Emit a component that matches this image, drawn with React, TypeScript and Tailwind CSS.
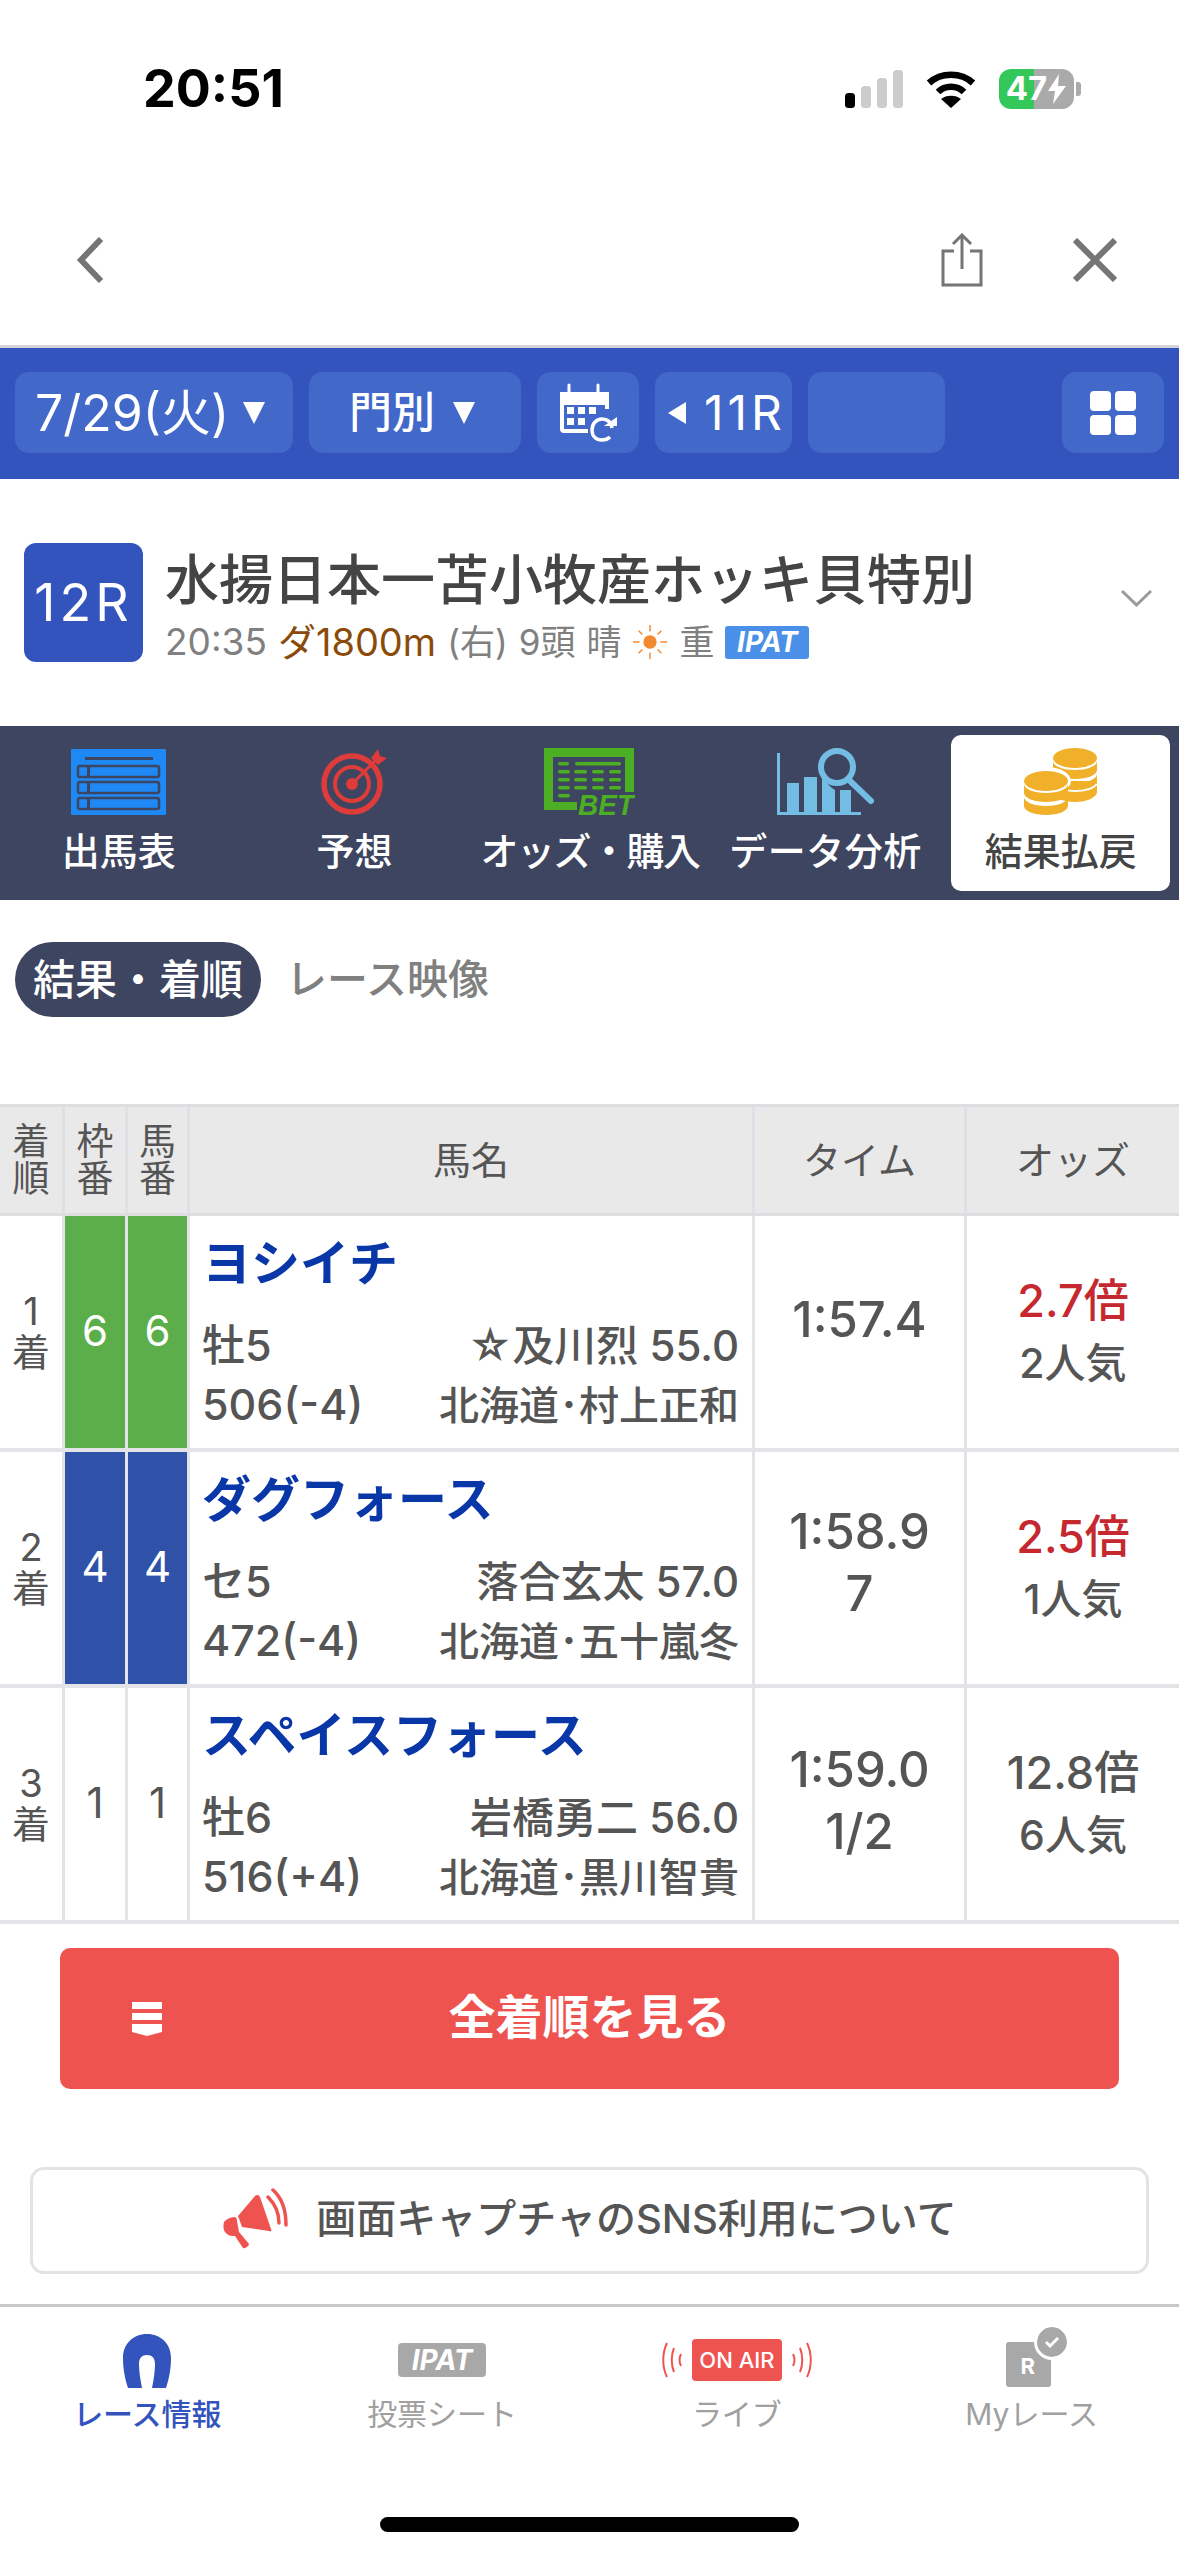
const ChevronLeftIcon = () => (
  <svg width="28" height="46" viewBox="0 0 28 46" fill="none" stroke="#757575" strokeWidth="6">
    <path d="M25 2 L5 23 L25 44" />
  </svg>
)

const ShareIcon = () => (
  <svg width="42" height="54" viewBox="0 0 42 54" fill="none" stroke="#757575" strokeWidth="3">
    <path d="M13 18 H2 V52 H40 V18 H29" />
    <path d="M21 36 V2 M12 11 L21 2 L30 11" />
  </svg>
)

const CloseIcon = () => (
  <svg width="44" height="44" viewBox="0 0 44 44" fill="none" stroke="#757575" strokeWidth="6">
    <path d="M2 2 L42 42 M42 2 L2 42" />
  </svg>
)

const SignalIcon = () => (
  <svg width="58" height="38" viewBox="0 0 58 38">
    <rect x="0" y="23" width="10" height="15" rx="3.5" fill="#000" />
    <rect x="16" y="16" width="10" height="22" rx="3.5" fill="#ccc" />
    <rect x="32" y="8" width="10" height="30" rx="3.5" fill="#ccc" />
    <rect x="48" y="0" width="10" height="38" rx="3.5" fill="#ccc" />
  </svg>
)

const WifiIcon = () => (
  <svg width="50" height="38" viewBox="0 0 50 38" fill="none" stroke="#000" strokeWidth="6.5">
    <path d="M3 13 C15 2 35 2 47 13" />
    <path d="M12 22 C19 15 31 15 38 22" />
    <path d="M25 38 L15 29 C20 24.5 30 24.5 35 29 Z" fill="#000" stroke="none" />
  </svg>
)

const BoltIcon = () => (
  <svg width="20" height="30" viewBox="0 0 20 30" fill="#fff">
    <path d="M12 0 L1 17 H8 L6 30 L19 12 H11 Z" />
  </svg>
)

const CalendarIcon = () => (
  <svg width="60" height="60" viewBox="18 10 60 60" fill="none" stroke="#fff" strokeWidth="4">
    <path d="M48 58 H24 C22.5 58 22 57.5 22 56 V23 C22 21.5 22.5 21 24 21 H65 C66.5 21 67 21.5 67 23 V36" />
    <path d="M22 21 H67 V30 H22 Z" fill="#fff" stroke="#fff" />
    <path d="M29 12 V23 M58 12 V23" strokeWidth="3" strokeLinecap="round" />
    <g fill="#fff" stroke="none">
      <rect x="27" y="34" width="7" height="7" />
      <rect x="38" y="34" width="7" height="7" />
      <rect x="49" y="34" width="7" height="7" />
      <rect x="27" y="45" width="7" height="7" />
      <rect x="38" y="45" width="7" height="7" />
    </g>
    <path d="M72 55 C71 49 67 46 62 46 C56 46 52 51 52 57 C52 63 56 67 62 67 C65 67 68 66 70 64" strokeWidth="3.5" />
    <path d="M64 53 H77 V44 Z" fill="#fff" stroke="none" />
  </svg>
)

const GridIcon = () => (
  <div className="grid grid-cols-2 gap-[4px]">
    <div className="h-[20px] w-[21px] rounded-[4px] bg-white" />
    <div className="h-[20px] w-[21px] rounded-[4px] bg-white" />
    <div className="h-[20px] w-[21px] rounded-[4px] bg-white" />
    <div className="h-[20px] w-[21px] rounded-[4px] bg-white" />
  </div>
)

const EntryIcon = () => (
  <svg width="95" height="66" viewBox="0 0 95 66">
    <rect width="95" height="66" rx="1" fill="#1e88f5" />
    <rect x="14" y="8" width="68" height="3" fill="#3d4560" />
    <g fill="none" stroke="#3d4560" strokeWidth="2.5">
      <rect x="7" y="17" width="81" height="11" rx="2" />
      <rect x="7" y="33" width="81" height="11" rx="2" />
      <rect x="7" y="49" width="81" height="11" rx="2" />
    </g>
    <g fill="#3d4560">
      <rect x="16" y="18" width="3" height="9" />
      <rect x="16" y="34" width="3" height="9" />
      <rect x="16" y="50" width="3" height="9" />
    </g>
  </svg>
)

const TargetIcon = () => (
  <svg width="66" height="66" viewBox="0 0 66 66" fill="none" stroke="#dd3c3a">
    <circle cx="31" cy="35" r="28" strokeWidth="5.5" />
    <circle cx="31" cy="35" r="17" strokeWidth="4" />
    <circle cx="31" cy="35" r="6" fill="#dd3c3a" stroke="none" />
    <path d="M31 35 L56 10" strokeWidth="3" />
    <path d="M50 9 L57 0 L59 7 L66 9 L57 16 Z" fill="#dd3c3a" stroke="none" />
  </svg>
)

const BetIcon = () => (
  <svg width="91" height="67" viewBox="9 8 91 67">
    <path d="M9 8 H99 V52 H90 V17 H18 V62 H42 V70 H9 Z" fill="#4caf23" />
    <g fill="#4caf23">
      <rect x="23" y="22" width="11" height="3.5" rx="1.7" />
      <rect x="40" y="22" width="46" height="3.5" rx="1.7" />
      <rect x="23" y="30" width="12" height="3.5" rx="1.7" />
      <rect x="39" y="30" width="13" height="3.5" rx="1.7" />
      <rect x="57" y="30" width="12" height="3.5" rx="1.7" />
      <rect x="74" y="30" width="12" height="3.5" rx="1.7" />
      <rect x="23" y="38" width="12" height="3.5" rx="1.7" />
      <rect x="39" y="38" width="13" height="3.5" rx="1.7" />
      <rect x="57" y="38" width="12" height="3.5" rx="1.7" />
      <rect x="74" y="38" width="12" height="3.5" rx="1.7" />
      <rect x="23" y="46" width="12" height="3.5" rx="1.7" />
      <rect x="39" y="46" width="13" height="3.5" rx="1.7" />
      <rect x="57" y="46" width="12" height="3.5" rx="1.7" />
      <rect x="74" y="46" width="12" height="3.5" rx="1.7" />
      <rect x="23" y="54" width="12" height="3.5" rx="1.7" />
    </g>
    <text x="43" y="75" fontSize="29" fontWeight="700" fontStyle="italic" fill="#4caf23" fontFamily="Liberation Sans, sans-serif" textLength="56" lengthAdjust="spacingAndGlyphs">BET</text>
  </svg>
)

const ChartIcon = () => (
  <svg width="98" height="67" viewBox="0 0 98 67" fill="#73bde4">
    <rect x="0" y="5" width="3" height="62" />
    <rect x="0" y="64" width="84" height="3" />
    <rect x="10" y="35" width="12" height="29" />
    <rect x="27" y="29" width="13" height="35" />
    <path d="M45 25 C48 34 54 40 58 42 V64 H45 Z" />
    <path d="M63 42 H74 V64 H63 Z" />
    <circle cx="60" cy="19" r="16" fill="none" stroke="#73bde4" strokeWidth="6" />
    <path d="M71 31 L94 53" fill="none" stroke="#73bde4" strokeWidth="6" strokeLinecap="round" />
  </svg>
)

const Coin = ({ x, y }: { x: number; y: number }) => (
  <g transform={`translate(${x} ${y})`}>
    <path d="M0 26 V35 C0 40 10 44 22 44 C34 44 44 40 44 35 V26 C44 31 34 35 22 35 C10 35 0 31 0 26 Z" fill="#f0b02a" />
    <path d="M0 13 V22 C0 27 10 31 22 31 C34 31 44 27 44 22 V13 C44 18 34 22 22 22 C10 22 0 18 0 13 Z" fill="#f0b02a" />
    <ellipse cx="22" cy="10" rx="22" ry="10" fill="#f0b02a" />
  </g>
)

const CoinsIcon = () => (
  <svg width="74" height="67" viewBox="0 0 74 67">
    <Coin x={29} y={0} />
    <path d="M29 33 H73 V44 C73 49 63 54 51 54 C39 54 29 49 29 44 Z" fill="#f0b02a" />
    <path d="M29 36 C34 41 44 43 51 43 C60 43 69 41 73 36" fill="none" stroke="#fff" strokeWidth="2" />
    <ellipse cx="22" cy="33" rx="25" ry="14" fill="#fff" />
    <Coin x={0} y={23} />
  </svg>
)

const SunIcon = () => (
  <svg width="36" height="36" viewBox="0 0 38 38" fill="#f08a2c" stroke="#f08a2c">
    <circle cx="19" cy="19" r="7" stroke="none" />
    <path d="M19 1 V8 M19 30 V37 M1 19 H8 M30 19 H37 M7 7 L11 11 M27 27 L31 31 M31 7 L27 11 M11 27 L7 31" strokeWidth="1.5" />
  </svg>
)

const DownIcon = () => (
  <svg width="33" height="18" viewBox="0 0 33 18" fill="none" stroke="#9a9a9a" strokeWidth="3">
    <path d="M2 2 L16.5 16 L31 2" />
  </svg>
)

const ListDownIcon = () => (
  <svg width="30" height="34" viewBox="0 0 30 34" fill="#fff">
    <rect width="30" height="7" />
    <rect y="11" width="30" height="7" />
    <path d="M0 22 H30 V30 L15 34 L0 30 Z" />
  </svg>
)

const MegaphoneIcon = () => (
  <svg width="66" height="62" viewBox="14 10 66 62" fill="#ef5350">
    <path d="M30 38 L47 18 C49 16 51 17 52 19 L63 51 C64 53 63 54 61 53 L34 49 Z" />
    <path d="M16 44 C17 42 23 39 26 39 C28 39 29 40 29 43 L31 54 L41 66 C41 68 37 71 35 70 L27 58 C24 58 21 58 19 56 C15 53 15 48 16 44 Z" />
    <path d="M60 19 C67 26 71 35 71 45 M65 12 C74 20 78 33 78 47" fill="none" stroke="#ef5350" strokeWidth="3.5" strokeLinecap="round" />
  </svg>
)

const HorseshoeIcon = () => (
  <svg width="48" height="54" viewBox="0 0 48 54" fill="#3353bd">
    <path d="M5 54 C1 42 0 32 0 24 C0 10 10 0 24 0 C38 0 48 10 48 24 C48 32 47 42 43 54 H29 C31 44 32 36 32 30 C32 24 29 21 24 21 C19 21 16 24 16 30 C16 36 17 44 19 54 Z" />
  </svg>
)

const WavesIcon = ({ flip }: { flip?: boolean }) => (
  <svg width="22" height="36" viewBox="0 0 22 36" fill="none" stroke="#ef5350" strokeWidth="2" className={flip ? "-scale-x-100" : ""}>
    <path d="M6 1 C1 11 1 25 6 35" />
    <path d="M13 6 C10 13 10 23 13 30" />
    <path d="M20 12 C18 16 18 20 20 24" />
  </svg>
)

const MyRaceIcon = () => (
  <div className="relative h-[45px] w-[45px] rounded-[3px] bg-[#a8a8a8]">
    <span className="flex h-full items-center justify-center pt-[3px] pr-[2px] text-[22px] font-bold text-white">R</span>
    <div className="absolute right-[-16px] top-[-15px] flex h-[30px] w-[30px] items-center justify-center rounded-full bg-[#a8a8a8] outline-[3px] outline-white">
      <svg width="14" height="12" viewBox="0 0 14 12" fill="none" stroke="#fff" strokeWidth="3">
        <path d="M1 6 L5 10 L13 2" />
      </svg>
    </div>
  </div>
)

const races = [
  {
    rank: "1",
    frame: "6",
    num: "6",
    bg: "bg-[#5cae4a]",
    fg: "text-white",
    name: "ヨシイチ",
    sex: "牡5",
    jockey: "☆及川烈 55.0",
    weight: "506(-4)",
    trainer: "北海道･村上正和",
    time: ["1:57.4"],
    timePad: "pb-[24px]",
    odds: "2.7倍",
    oddsColor: "text-[#c5282e]",
    pop: "2人気",
  },
  {
    rank: "2",
    frame: "4",
    num: "4",
    bg: "bg-[#2f52a8]",
    fg: "text-white",
    name: "ダグフォース",
    sex: "セ5",
    jockey: "落合玄太 57.0",
    weight: "472(-4)",
    trainer: "北海道･五十嵐冬",
    time: ["1:58.9", "7"],
    timePad: "pb-[10px]",
    odds: "2.5倍",
    oddsColor: "text-[#c5282e]",
    pop: "1人気",
  },
  {
    rank: "3",
    frame: "1",
    num: "1",
    bg: "bg-white",
    fg: "text-[#555]",
    name: "スペイスフォース",
    sex: "牡6",
    jockey: "岩橋勇二 56.0",
    weight: "516(+4)",
    trainer: "北海道･黒川智貴",
    time: ["1:59.0", "1/2"],
    timePad: "pb-[7px]",
    odds: "12.8倍",
    oddsColor: "text-[#555]",
    pop: "6人気",
  },
]

const tabs = [
  { label: "出馬表", icon: <EntryIcon />, track: "" },
  { label: "予想", icon: <TargetIcon />, track: "" },
  { label: "オッズ・購入", icon: <BetIcon />, track: "tracking-[-1.5px]" },
  { label: "データ分析", icon: <ChartIcon />, track: "tracking-[0.5px]" },
]

const Triangle = () => (
  <div className="h-0 w-0 border-x-[11px] border-t-[22px] border-x-transparent border-t-white" />
)

const App = () => {
  return (
    <div className="flex h-[2556px] w-[1179px] flex-col overflow-hidden bg-white font-['Inter','Noto_Sans_CJK_JP',sans-serif] text-[#555]">
      {/* status bar */}
      <div className="flex h-[175px] shrink-0 items-start justify-between pl-[143px] pr-[98px] pt-[60px]">
        <span className="text-[52px] font-bold leading-[58px] text-black">20:51</span>
        <div className="flex items-center gap-[23px] pt-[9px]">
          <SignalIcon />
          <WifiIcon />
          <div className="flex items-center gap-[2px]">
            <div className="flex h-[40px] w-[75px] items-center justify-center rounded-[12px] bg-[linear-gradient(90deg,#34c759_47%,#aaaaaa_47%)] text-[33px] font-bold text-white">
              47
              <BoltIcon />
            </div>
            <div className="h-[14px] w-[5px] rounded-r-[3px] bg-[#aaa]" />
          </div>
        </div>
      </div>

      {/* browser bar */}
      <div className="flex h-[170px] shrink-0 items-center justify-between pl-[76px] pr-[62px]">
        <ChevronLeftIcon />
        <div className="flex items-center gap-[90px]">
          <ShareIcon />
          <CloseIcon />
        </div>
      </div>

      {/* date bar */}
      <div className="flex h-[134px] shrink-0 items-start gap-[16px] border-t-[3px] border-[#d4d4d8] bg-[#3353bd] pl-[15px] pr-[15px] pt-[24px] text-white">
        <div className="flex h-[81px] w-[278px] items-center gap-[14px] rounded-[14px] bg-[#4268c9] pl-[20px]">
          <span className="text-[50px] leading-none">7/29(火)</span>
          <Triangle />
        </div>
        <div className="flex h-[81px] w-[212px] items-center gap-[18px] rounded-[14px] bg-[#4268c9] pl-[40px]">
          <span className="text-[43px] font-medium leading-none">門別</span>
          <Triangle />
        </div>
        <div className="flex h-[81px] w-[102px] items-center justify-center rounded-[14px] bg-[#4268c9]">
          <CalendarIcon />
        </div>
        <div className="flex h-[81px] w-[137px] items-center gap-[18px] rounded-[14px] bg-[#4268c9] pl-[13px]">
          <div className="h-0 w-0 border-y-[11px] border-r-[18px] border-y-transparent border-r-white" />
          <span className="text-[48px] leading-none tracking-[4px]">11R</span>
        </div>
        <div className="h-[81px] w-[137px] rounded-[14px] bg-[#4268c9]" />
        <div className="ml-auto flex h-[81px] w-[102px] items-center justify-center rounded-[14px] bg-[#4268c9]">
          <GridIcon />
        </div>
      </div>

      {/* race title */}
      <div className="flex h-[247px] shrink-0 items-start pl-[24px] pr-[26px] pt-[64px]">
        <div className="flex h-[119px] w-[119px] items-center justify-center rounded-[12px] bg-[#3353bd] text-[52px] tracking-[4px] text-white">
          12R
        </div>
        <div className="ml-[22px] flex flex-col pt-[8px]">
          <div className="text-[54px] font-medium leading-[60px] text-[#444]">水揚日本一苫小牧産ホッキ貝特別</div>
          <div className="mt-[9px] flex items-center gap-[11px] text-[35px] leading-[44px] text-[#808080]">
            <span className="text-[37px]">20:35</span>
            <span className="text-[38px] text-[#8a4a0a]">ダ1800m</span>
            <span>(右)</span>
            <span>9頭</span>
            <span>晴</span>
            <SunIcon />
            <span>重</span>
            <span className="flex h-[33px] w-[84px] items-center justify-center rounded-[3px] bg-[#4a90e8] text-[28px] font-bold italic text-white">IPAT</span>
          </div>
        </div>
        <div className="ml-auto pt-[46px]">
          <DownIcon />
        </div>
      </div>

      {/* section tabs */}
      <div className="grid h-[174px] shrink-0 grid-cols-5 bg-[#3d4560] pl-[1px]">
        {tabs.map((t) => (
          <div key={t.label} className="flex flex-col items-center pt-[22px] text-[38px] font-medium leading-[46px] text-white">
            <div className="flex h-[67px] items-center">{t.icon}</div>
            <span className={`mt-[13px] whitespace-nowrap ${t.track}`}>{t.label}</span>
          </div>
        ))}
        <div className="flex flex-col items-center pb-[9px] pl-[8px] pr-[9px] pt-[9px]">
          <div className="flex h-full w-full flex-col items-center rounded-[10px] bg-white pt-[13px] text-[38px] font-medium leading-[46px] text-[#444]">
            <div className="flex h-[67px] items-center">
              <CoinsIcon />
            </div>
            <span className="mt-[13px] whitespace-nowrap">結果払戻</span>
          </div>
        </div>
      </div>

      {/* result tabs */}
      <div className="flex h-[204px] shrink-0 items-start gap-[25px] pl-[15px] pt-[42px]">
        <div className="flex h-[75px] w-[246px] items-center justify-center rounded-full bg-[#3d4560] text-[42px] font-medium text-white">
          結果・着順
        </div>
        <div className="flex h-[75px] items-center text-[41px] font-medium text-[#808080]">レース映像</div>
      </div>

      {/* results table */}
      <div className="shrink-0">
        <div className="grid h-[112px] grid-cols-[62px_63px_62px_565px_212px_215px] border-y-[3px] border-[#dedee0] bg-[#e9e9e9] text-[38px] leading-[38px]">
          <div className="flex items-center justify-center text-[37px] leading-[37px]">
            <span className="w-[37px] text-center">着順</span>
          </div>
          <div className="flex items-center justify-center border-l-[3px] border-[#dfdfe6] text-[37px] leading-[37px]">
            <span className="w-[37px] text-center">枠番</span>
          </div>
          <div className="flex items-center justify-center border-l-[3px] border-[#dfdfe6] text-[37px] leading-[37px]">
            <span className="w-[37px] text-center">馬番</span>
          </div>
          <div className="flex items-center justify-center border-l-[3px] border-[#dfdfe6]">馬名</div>
          <div className="flex items-center justify-center border-l-[3px] border-[#dfdfe6]">タイム</div>
          <div className="flex items-center justify-center border-l-[3px] border-[#dfdfe6]">オッズ</div>
        </div>
        {races.map((r) => (
          <div key={r.rank} className="grid h-[236px] grid-cols-[62px_63px_62px_565px_212px_215px] border-b-[4px] border-[#e3e3e8]">
            <div className="flex flex-col items-center justify-center text-[38px] leading-[41px]">
              <span>{r.rank}</span>
              <span>着</span>
            </div>
            <div className="border-l-[3px] border-[#e3e3e8]">
              <div className={`flex h-full items-center justify-center pb-[4px] text-[42px] ${r.bg} ${r.fg}`}>{r.frame}</div>
            </div>
            <div className="border-l-[3px] border-[#e3e3e8]">
              <div className={`flex h-full items-center justify-center pb-[4px] text-[42px] ${r.bg} ${r.fg}`}>{r.num}</div>
            </div>
            <div className="flex flex-col border-l-[3px] border-[#e3e3e8] pl-[12px] pr-[13px] pt-[24px]">
              <div className="text-[49px] font-bold leading-[48px] text-[#0a37a8]">{r.name}</div>
              <div className="mt-[28px] flex items-baseline justify-between leading-[58px]">
                <span className="text-[43px] font-medium">{r.sex}</span>
                <span className="text-[42px] font-medium">{r.jockey}</span>
              </div>
              <div className="flex items-baseline justify-between leading-[58px]">
                <span className="text-[43px] font-medium">{r.weight}</span>
                <span className="text-[40px] font-medium">{r.trainer}</span>
              </div>
            </div>
            <div className={`flex flex-col items-center justify-center border-l-[3px] border-[#e3e3e8] text-[49px] font-medium leading-[62px] ${r.timePad}`}>
              {r.time.map((t) => (
                <span key={t}>{t}</span>
              ))}
            </div>
            <div className="flex flex-col items-center justify-center border-l-[3px] border-[#e3e3e8] leading-[63px]">
              <span className={`text-[45px] font-medium ${r.oddsColor}`}>{r.odds}</span>
              <span className="text-[41px] font-medium">{r.pop}</span>
            </div>
          </div>
        ))}
      </div>

      {/* full result button */}
      <div className="relative mx-[60px] mt-[24px] flex h-[141px] shrink-0 items-center justify-center rounded-[10px] bg-[#ef5350] pb-[2px] text-[47px] font-bold text-white">
        <div className="absolute left-[72px] top-[54px]">
          <ListDownIcon />
        </div>
        全着順を見る
      </div>

      {/* sns notice */}
      <div className="mx-[30px] mt-[78px] flex h-[107px] shrink-0 items-center justify-center gap-[28px] rounded-[14px] border-[3px] border-[#e3e3e3] pb-[4px] text-[40px] font-medium">
        <MegaphoneIcon />
        <span>画面キャプチャのSNS利用について</span>
      </div>

      {/* bottom nav */}
      <div className="mt-[30px] grid flex-1 grid-cols-4 border-t-[3px] border-[#c8c8c8] text-[30px] leading-[40px] text-[#a0a0a0]">
        <div className="flex flex-col items-center">
          <div className="flex h-[87px] items-end pb-[6px]">
            <HorseshoeIcon />
          </div>
          <span className="font-medium text-[#3353bd]">レース情報</span>
        </div>
        <div className="flex flex-col items-center">
          <div className="flex h-[87px] items-center pt-[18px]">
            <div className="flex h-[34px] w-[88px] items-center justify-center rounded-[4px] bg-[#a8a8a8] text-[28px] font-bold italic text-white">IPAT</div>
          </div>
          <span>投票シート</span>
        </div>
        <div className="flex flex-col items-center">
          <div className="flex h-[87px] items-center gap-[9px] pt-[18px]">
            <WavesIcon />
            <div className="flex h-[42px] w-[90px] items-center justify-center rounded-[4px] bg-[#ef5350] text-[22px] font-medium text-white">ON AIR</div>
            <WavesIcon flip />
          </div>
          <span>ライブ</span>
        </div>
        <div className="flex flex-col items-center">
          <div className="flex h-[87px] items-end pb-[7px] pr-[6px]">
            <MyRaceIcon />
          </div>
          <span>Myレース</span>
        </div>
      </div>

      {/* home indicator */}
      <div className="mx-auto mb-[24px] h-[15px] w-[419px] shrink-0 rounded-full bg-black" />
    </div>
  )
}

export default App
